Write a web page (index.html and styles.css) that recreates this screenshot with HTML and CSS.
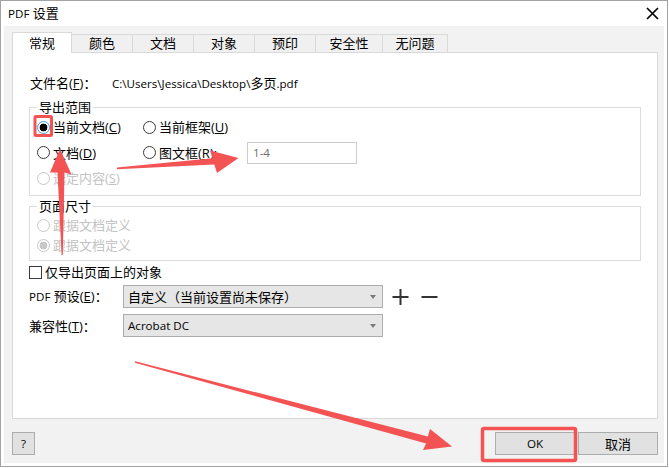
FILE: index.html
```html
<!DOCTYPE html>
<html lang="zh-CN">
<head>
<meta charset="utf-8">
<title>PDF 设置</title>
<link rel="stylesheet" href="styles.css">
</head>
<body>
<div class="window">
  <div class="titlebar">
    <span class="title"><span class="lat">PDF</span> 设置</span>
    <svg class="close" width="13" height="13" viewBox="0 0 13 13"><path d="M1 1L12 12M12 1L1 12" stroke="#000" stroke-width="1.7" fill="none"/></svg>
  </div>
  <div class="client">
    <div class="tabs">
      <div class="tab active t60">常规</div>
      <div class="tab t61">颜色</div>
      <div class="tab t61">文档</div>
      <div class="tab t61">对象</div>
      <div class="tab t61">预印</div>
      <div class="tab t67">安全性</div>
      <div class="tab t65">无问题</div>
    </div>
    <div class="panel">
      <div class="file-row">
        <span class="file-lbl">文件名(<u>F</u>)：</span>
        <span class="file-path"><span class="lat">C:\Users\Jessica\Desktop\</span>多页<span class="lat">.pdf</span></span>
      </div>
      <fieldset class="group range">
        <legend>导出范围</legend>
        <div class="range-grid">
          <span class="opt"><span class="rb on hot"></span><span>当前文档(<u>C</u>)</span></span>
          <span class="opt"><span class="rb"></span><span>当前框架(<u>U</u>)</span></span>
          <span></span>
          <span class="opt"><span class="rb"></span><span>文档(<u>D</u>)</span></span>
          <span class="opt"><span class="rb"></span><span>图文框(<u>R</u>):</span></span>
          <span class="field"><span class="lat">1-4</span></span>
          <span class="opt dis"><span class="rb"></span><span>选定内容(<u>S</u>)</span></span>
          <span></span>
          <span></span>
        </div>
      </fieldset>
      <fieldset class="group size">
        <legend>页面尺寸</legend>
        <div class="size-list">
          <span class="opt dis"><span class="rb"></span><span>跟据文档定义</span></span>
          <span class="opt dis"><span class="rb on"></span><span>跟据文档定义</span></span>
        </div>
      </fieldset>
      <div class="check-row">
        <span class="cb"></span><span>仅导出页面上的对象</span>
      </div>
      <div class="form-row preset">
        <span class="form-lbl"><span class="lat">PDF</span> 预设(<u>E</u>)：</span>
        <span class="select"><span>自定义（当前设置尚未保存）</span><span class="caret"></span></span>
        <svg class="pm plus" width="17" height="18" viewBox="0 0 17 18"><path d="M0.5 9H16.5M8.5 1V17" stroke="#333" stroke-width="2" fill="none"/></svg>
        <svg class="pm minus" width="17" height="18" viewBox="0 0 17 18"><path d="M0.5 9H16.5" stroke="#333" stroke-width="2" fill="none"/></svg>
      </div>
      <div class="form-row compat">
        <span class="form-lbl">兼容性(<u>T</u>)：</span>
        <span class="select"><span class="lat">Acrobat DC</span><span class="caret"></span></span>
      </div>
    </div>
    <div class="footer">
      <button class="btn help"><span class="lat">?</span></button>
      <div class="actions">
        <button class="btn ok"><span class="lat">OK</span></button>
        <button class="btn cancel">取消</button>
      </div>
    </div>
  </div>
</div>
<svg class="marks" width="669" height="468" viewBox="0 0 669 468">
  <rect x="35" y="116.5" width="16.5" height="19" rx="1" fill="none" stroke="#f35353" stroke-width="3"/>
  <rect x="482.5" y="428.5" width="93" height="32" rx="1.5" fill="none" stroke="#f35353" stroke-width="3.5"/>
  <polygon fill="#f35353" points="60,149 71.5,174.5 64.5,172.5 62.8,255 61.6,255 57.5,172.5 50,172.5"/>
  <polygon fill="#f35353" points="117,167.6 212.5,158.2 210,150.5 238.5,158 217,173 214.3,164.6 117,169.2"/>
  <polygon fill="#f35353" points="135.2,361.3 427.9,436.6 430,429 452,446.5 423,450 426.1,443.4 134.8,362.7"/>
</svg>
</body>
</html>
```
FILE: styles.css
```css
* { box-sizing: border-box; }
html, body { margin: 0; padding: 0; background: #fff; }
body {
  width: 669px;
  height: 468px;
  overflow: hidden;
  position: relative;
  font-family: "Open Sans", "Noto Sans CJK SC", sans-serif;
  font-size: 13px;
  line-height: 16px;
  color: #000;
}
u { text-decoration: underline; text-underline-offset: 1px; }
.lat { font-family: "Open Sans", sans-serif; font-size: 11.6px; }

.window {
  width: 668px;
  height: 467px;
  border: 1px solid #a3a3a3;
  background: #fff;
  display: flex;
  flex-direction: column;
}
.titlebar {
  height: 25px;
  flex: none;
  display: flex;
  align-items: center;
  justify-content: space-between;
  padding: 0 8px 0 7px;
}
.title { font-size: 13px; line-height: 16px; }
.close { display: block; }

.client {
  flex: 1;
  margin: 0 3px 3px 3px;
  background: #f2f2f2;
  padding: 6px 6px 8px 8px;
  display: flex;
  flex-direction: column;
}

.tabs {
  height: 20px;
  flex: none;
  display: flex;
  align-items: flex-end;
  position: relative;
  z-index: 1;
}
.tab {
  height: 18px;
  border: 1px solid #d9d9d9;
  border-left: none;
  border-bottom: none;
  background: #f0f0f0;
  text-align: center;
  line-height: 17px;
}
.tab.active {
  height: 21px;
  margin-bottom: -1px;
  border-left: 1px solid #d9d9d9;
  background: #fff;
  padding-top: 2px;
  line-height: 17px;
}
.t60 { width: 60px; }
.t61 { width: 61px; }
.t65 { width: 65px; }
.t67 { width: 67px; }

.panel {
  flex: 1;
  background: #fff;
  border: 1px solid #d9d9d9;
  padding: 21px 16px 0 16px;
  display: flex;
  flex-direction: column;
}

.file-row {
  height: 18px;
  display: flex;
  align-items: center;
}
.file-lbl { width: 83px; padding-left: 1px; }

.group {
  margin: 0;
  border: 1px solid #dcdcdc;
  min-width: 0;
}
.group legend {
  padding: 0 2px;
  margin: 0;
  line-height: 16px;
}
.range {
  margin-top: 7px;
  padding: 0 0 5px 7px;
}
.range-grid {
  display: grid;
  grid-template-columns: 106px 104px 110px;
  grid-template-rows: 24px 27px 24px;
  align-items: center;
}
.size {
  margin-top: 2px;
  padding: 1px 0 5px 7px;
}
.size-list {
  display: grid;
  grid-template-rows: 20px 20px;
  align-items: center;
}

.opt {
  display: flex;
  align-items: center;
  gap: 3px;
  white-space: nowrap;
}
.rb {
  width: 13px;
  height: 13px;
  flex: none;
  border: 1px solid #3a3a3a;
  border-radius: 50%;
  background: #fff;
}
.rb.on { background: radial-gradient(circle, #000 0 3.6px, #fff 4.2px); }
.rb.hot { border-color: #3f9ee6; }
.opt.dis { color: #c3c3c3; }
.opt.dis .rb { border-color: #c8c8c8; }
.opt.dis .rb.on { background: radial-gradient(circle, #c8c8c8 0 3.6px, #fff 4.2px); }

.field {
  height: 22px;
  border: 1px solid #cccccc;
  background: #fff;
  color: #6e6e6e;
  padding-left: 5px;
  display: flex;
  align-items: center;
}

.check-row {
  height: 22px;
  display: flex;
  align-items: center;
  gap: 3px;
}
.cb {
  width: 13px;
  height: 13px;
  flex: none;
  border: 1px solid #3a3a3a;
  background: #fff;
}

.form-row {
  display: flex;
  align-items: center;
  height: 23px;
}
.preset { margin-top: 2px; }
.compat { margin-top: 6px; }
.form-lbl { width: 94px; }
.select {
  width: 260px;
  height: 23px;
  border: 1px solid #acacac;
  background: #e6e6e6;
  padding: 0 6px 0 4px;
  display: flex;
  align-items: center;
  justify-content: space-between;
}
.caret {
  width: 0;
  height: 0;
  border-left: 3.5px solid transparent;
  border-right: 3.5px solid transparent;
  border-top: 4px solid #7a7a7a;
}
.pm { display: block; }
.plus { margin-left: 9px; }
.minus { margin-left: 12px; }

.footer {
  flex: none;
  margin-top: 13px;
  height: 23px;
  display: flex;
  justify-content: space-between;
}
.actions { display: flex; gap: 3px; }
.btn {
  height: 23px;
  border: 1px solid #adadad;
  background: #e1e1e1;
  font-family: inherit;
  font-size: 13px;
  line-height: 16px;
  color: #000;
  padding: 0;
}
.help { width: 23px; }
.ok, .cancel { width: 80px; }

.marks {
  position: absolute;
  left: 0;
  top: 0;
  pointer-events: none;
}
```
